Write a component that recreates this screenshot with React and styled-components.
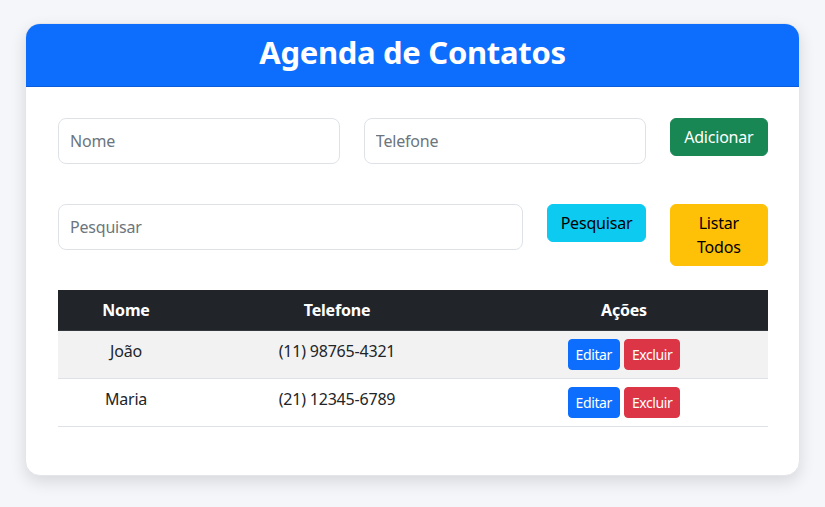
import React from "react";
import styled, { createGlobalStyle } from "styled-components";

const Global = createGlobalStyle`
  * { box-sizing: border-box; }
  body {
    margin: 0;
    background: #f5f6fa;
    font-family: "Noto Sans", "Open Sans", "Liberation Sans", sans-serif;
    color: #212529;
    font-size: 16px;
    line-height: 1.5;
  }
`;

const Page = styled.div`
  padding: 23px 25px 32px 25px;
`;

const Card = styled.div`
  width: 775px;
  background: #fff;
  border-radius: 15px;
  overflow: hidden;
  border: 1px solid #e3e5ea;
  box-shadow: 0 6px 16px rgba(0, 0, 0, 0.12);
`;

const Header = styled.div`
  background: #0d6efd;
  border-bottom: 1px solid #0b5ed7;
  height: 63px;
  padding-bottom: 5px;
  display: flex;
  align-items: center;
  justify-content: center;
`;

const Title = styled.h1`
  margin: 0;
  color: #fff;
  font-size: 31px;
  font-weight: 700;
  letter-spacing: -0.3px;
  line-height: 1.2;
`;

const Body = styled.div`
  padding: 31px 31px 32px 32px;
  display: flex;
  flex-direction: column;
`;

const Row = styled.div`
  display: grid;
  grid-template-columns: repeat(12, 1fr);
  column-gap: 24px;
  align-items: start;
  margin-bottom: ${(p) => p.$mb}px;
`;

const Col = styled.div`
  grid-column: span ${(p) => p.$span};
`;

const Input = styled.input`
  width: 100%;
  height: 46px;
  padding: 10px 11px;
  font: inherit;
  font-size: 16px;
  letter-spacing: -0.2px;
  color: #212529;
  border: 1px solid #dee2e6;
  border-radius: 8px;
  outline: none;
  &::placeholder { color: #6c757d; }
`;

const Button = styled.button`
  width: 100%;
  font: inherit;
  font-size: 16px;
  line-height: 24px;
  letter-spacing: -0.2px;
  padding: 6px 12px;
  border: 1px solid ${(p) => p.$bg};
  border-radius: 6px;
  background: ${(p) => p.$bg};
  color: ${(p) => p.$fg};
  cursor: pointer;
`;

const Table = styled.table`
  width: 100%;
  border-collapse: collapse;
  margin-bottom: 16px;
`;

const Th = styled.th`
  background: #212529;
  color: #fff;
  font-weight: 700;
  letter-spacing: -0.2px;
  text-align: center;
  padding: 8px;
  border-bottom: 1px solid #32383e;
  width: ${(p) => p.$w}px;
`;

const Tr = styled.tr`
  background: ${(p) => (p.$striped ? "#f2f2f2" : "#fff")};
`;

const Td = styled.td`
  text-align: center;
  vertical-align: top;
  padding: 8px;
  border-bottom: 1px solid #dee2e6;
  color: #212529;
  letter-spacing: -0.2px;
`;

const SmallBtn = styled.button`
  font: inherit;
  font-size: 14px;
  line-height: 21px;
  letter-spacing: -0.4px;
  padding: 4px 7px;
  border: 1px solid ${(p) => p.$bg};
  border-radius: 4px;
  background: ${(p) => p.$bg};
  color: #fff;
  margin: 0 2px;
  cursor: pointer;
`;

const contatos = [
  { nome: "João", tel: "(11) 98765-4321" },
  { nome: "Maria", tel: "(21) 12345-6789" },
];

export default function App() {
  return (
    <>
      <Global />
      <Page>
        <Card>
          <Header>
            <Title>Agenda de Contatos</Title>
          </Header>
          <Body>
            <Row $mb={40}>
              <Col $span={5}><Input placeholder="Nome" /></Col>
              <Col $span={5}><Input placeholder="Telefone" /></Col>
              <Col $span={2}><Button $bg="#198754" $fg="#fff">Adicionar</Button></Col>
            </Row>
            <Row $mb={24}>
              <Col $span={8}><Input placeholder="Pesquisar" /></Col>
              <Col $span={2}><Button $bg="#0dcaf0" $fg="#000">Pesquisar</Button></Col>
              <Col $span={2}><Button $bg="#ffc107" $fg="#000">Listar Todos</Button></Col>
            </Row>
            <Table>
              <thead>
                <tr>
                  <Th $w={136}>Nome</Th>
                  <Th $w={286}>Telefone</Th>
                  <Th $w={288}>Ações</Th>
                </tr>
              </thead>
              <tbody>
                {contatos.map((c, i) => (
                  <Tr key={c.nome} $striped={i % 2 === 0}>
                    <Td>{c.nome}</Td>
                    <Td>{c.tel}</Td>
                    <Td>
                      <SmallBtn $bg="#0d6efd">Editar</SmallBtn>
                      <SmallBtn $bg="#dc3545">Excluir</SmallBtn>
                    </Td>
                  </Tr>
                ))}
              </tbody>
            </Table>
          </Body>
        </Card>
      </Page>
    </>
  );
}
